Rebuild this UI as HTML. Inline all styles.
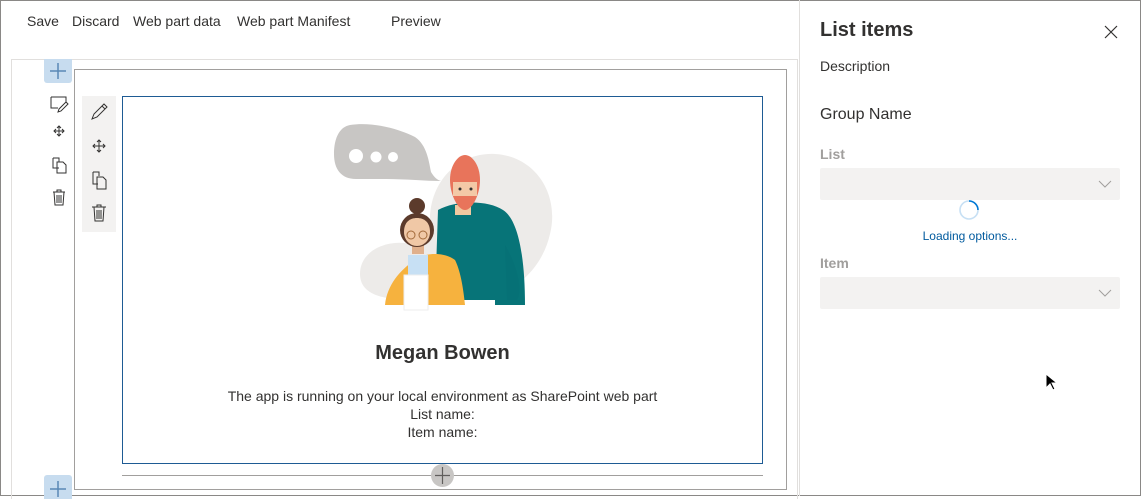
<!DOCTYPE html>
<html><head><style>
*{margin:0;padding:0;box-sizing:border-box}
body{width:1141px;height:496px;overflow:hidden;background:#fff;font-family:"Segoe UI","Liberation Sans",sans-serif;color:#323130;position:relative}
.a{position:absolute}
.frame{left:0;top:0;width:1141px;height:496px;border:1px solid #8a8886}
.menu span{position:absolute;top:13px;font-size:14px;color:#323130}
.ic{position:absolute}
</style></head><body>
<div class="a frame"></div>
<div class="menu">
<span style="left:27px">Save</span>
<span style="left:72px">Discard</span>
<span style="left:133px">Web part data</span>
<span style="left:237px">Web part Manifest</span>
<span style="left:391px">Preview</span>
</div>
<!-- canvas -->
<div class="a" style="left:11px;top:59px;width:787px;height:440px;border:1px solid #e1dfdd;border-bottom:none"></div>
<div class="a" style="left:44px;top:59px;width:28px;height:24px;background:#c7dcef;border-radius:0 0 3px 3px"></div>
<svg class="ic" style="left:44px;top:59px" width="28" height="24"><path d="M14 4v16M6 12h16" stroke="#5a88b5" stroke-width="1.5"/></svg>
<div class="a" style="left:44px;top:475px;width:28px;height:24px;background:#c7dcef;border-radius:3px 3px 0 0"></div>
<svg class="ic" style="left:44px;top:475px" width="28" height="24"><path d="M14 6v16M6 14h16" stroke="#5a88b5" stroke-width="1.5"/></svg>
<!-- left icons -->
<svg class="ic" style="left:48px;top:94px" width="22" height="120" fill="none" stroke="#323130" stroke-width="1">
<path d="M3 3h15v5M3 3v11h7M11 15l7-7 2 2-7 7-3 1z"/>
<path d="M11 32v10M6 37h10M9 34l2-2 2 2M9 40l2 2 2-2M8 35l-2 2 2 2M14 35l2 2-2 2"/>
<path d="M5 64v10h6M5 64h6v4M9 68h6l3 3v8h-9z"/>
<path d="M5 98h12M9 98v-2h4v2M6 98l1 13h8l1-13M9 101v8M11 101v8M13 101v8"/>
</svg>
<div class="a" style="left:74px;top:69px;width:713px;height:421px;border:1px solid #a19f9d"></div>
<div class="a" style="left:82px;top:96px;width:34px;height:136px;background:#f3f2f1"></div>
<svg class="ic" style="left:86px;top:100px" width="26" height="128" fill="none" stroke="#323130" stroke-width="1">
<path d="M6 19l2-5 10-10 3 3-10 10zM16 6l3 3"/>
<path d="M13 40v12M7 46h12M11 42l2-2 2 2M11 50l2 2 2-2M9 44l-2 2 2 2M17 44l2 2-2 2"/>
<path d="M7 72v12h5M7 72h6v4M11 77h6l3 3v9h-9z"/>
<path d="M6 107h14M11 107v-2h4v2M8 107l1 14h8l1-14M11 110v9M13 110v9M15 110v9"/>
</svg>
<div class="a" style="left:122px;top:96px;width:641px;height:368px;border:1px solid #1e5b94"></div>
<div class="a" style="left:122px;top:475px;width:641px;height:1px;background:#a19f9d"></div>
<div class="a" style="left:431px;top:464px;width:23px;height:23px;border-radius:50%;background:#c8c6c4"></div>
<svg class="ic" style="left:431px;top:464px" width="23" height="23"><path d="M11.5 3v17M4 11.5h15" stroke="#605e5c" stroke-width="1.2"/></svg>
<!-- illustration -->
<svg class="ic" style="left:320px;top:110px" width="250" height="210">
<path d="M30 15c20-3 45 2 65 12 12 8 14 25 16 35 3 5 6 8 10 9-15 0-35-2-55-2H36c-15 0-22-10-22-25 0-15 5-27 16-29z" fill="#c8c6c4"/>
<circle cx="36" cy="46" r="7" fill="#fff"/><circle cx="56" cy="47" r="5.5" fill="#fff"/><circle cx="73" cy="47" r="5" fill="#fff"/>
<path d="M110 110c0-40 30-68 65-66 40 2 65 40 55 80-8 35-35 58-60 60l-60 5c-30 2-70 2-70-25 0-25 30-35 50-30z" fill="#edebe9"/>
<path d="M118 100c18-10 50-10 65 0 16 10 22 50 22 95h-30v-5h-60z" fill="#077478"/>
<path d="M185 135c12 20 18 45 12 55h-10z" fill="#067176"/>
<rect x="135" y="95" width="16" height="10" fill="#f0c8a0"/>
<path d="M130 70c0-15 8-25 15-25s15 10 15 25c0 15-8 30-15 30s-15-15-15-30z" fill="#e8745b"/>
<rect x="133" y="72" width="24" height="14" fill="#f3c9a7"/>
<circle cx="140" cy="79" r="1.5" fill="#333"/><circle cx="151" cy="79" r="1.5" fill="#333"/>
<path d="M95 150c10-8 30-8 40 0 5 10 8 25 10 45H65c2-20 15-35 30-45z" fill="#f6b23e"/>
<rect x="88" y="145" width="20" height="25" fill="#c7e0f4"/>
<rect x="84" y="165" width="24" height="35" fill="#fff" stroke="#eee"/>
<rect x="92" y="128" width="12" height="16" fill="#e0b08c"/>
<circle cx="97" cy="120" r="17" fill="#5c3b2c"/>
<circle cx="97" cy="96" r="8" fill="#5c3b2c"/>
<path d="M84 122c0-10 6-14 13-14s13 4 13 14c0 8-6 14-13 14s-13-6-13-14z" fill="#f0c8a6"/>
<circle cx="91" cy="125" r="4" fill="none" stroke="#a36a3a"/><circle cx="103" cy="125" r="4" fill="none" stroke="#a36a3a"/>
</svg>
<div class="a" style="left:122px;top:342px;width:641px;text-align:center;font-size:20px;font-weight:bold;color:#323130">Megan Bowen</div>
<div class="a" style="left:122px;top:387px;width:641px;text-align:center;font-size:14px;line-height:18px;color:#323130">The app is running on your local environment as SharePoint web part<br>List name:<br>Item name:</div>
<!-- right panel -->
<div class="a" style="left:799px;top:0;width:1px;height:496px;background:#e1dfdd"></div>
<div class="a" style="left:820px;top:19px;font-size:20px;font-weight:bold">List items</div>
<svg class="ic" style="left:1104px;top:25px" width="14" height="14"><path d="M1 1l12 12M13 1L1 13" stroke="#323130" stroke-width="1.2"/></svg>
<div class="a" style="left:820px;top:58px;font-size:14px">Description</div>
<div class="a" style="left:820px;top:106px;font-size:16px">Group Name</div>
<div class="a" style="left:820px;top:146px;font-size:14px;font-weight:bold;color:#a19f9d">List</div>
<div class="a" style="left:820px;top:168px;width:300px;height:32px;background:#f3f2f1;border-radius:2px"></div>
<svg class="ic" style="left:1098px;top:179px" width="14" height="10"><path d="M1 2l6 6 6-6" stroke="#a19f9d" fill="none"/></svg>
<svg class="ic" style="left:958px;top:199px" width="22" height="22"><circle cx="11" cy="11" r="9" fill="none" stroke="#c7e0f4" stroke-width="1.6"/><path d="M11 2a9 9 0 0 1 9 9" fill="none" stroke="#0078d4" stroke-width="1.6"/></svg>
<div class="a" style="left:820px;top:229px;width:300px;text-align:center;font-size:12px;color:#005a9e">Loading options...</div>
<div class="a" style="left:820px;top:255px;font-size:14px;font-weight:bold;color:#a19f9d">Item</div>
<div class="a" style="left:820px;top:277px;width:300px;height:32px;background:#f3f2f1;border-radius:2px"></div>
<svg class="ic" style="left:1098px;top:288px" width="14" height="10"><path d="M1 2l6 6 6-6" stroke="#a19f9d" fill="none"/></svg>
<svg class="ic" style="left:1045px;top:373px" width="12" height="18"><path d="M1 1v14l4-4 3 6 2-1-3-6h5z" fill="#000" stroke="#fff" stroke-width="1"/></svg>
</body></html>
